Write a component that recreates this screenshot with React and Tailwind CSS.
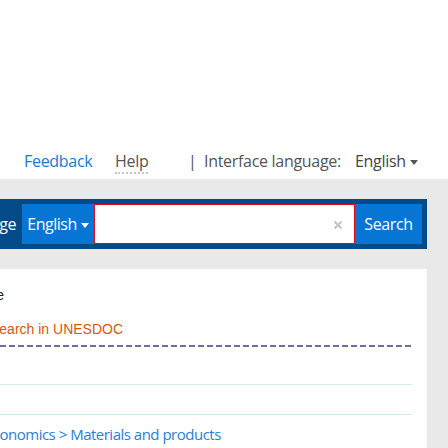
import React from 'react';

function Caret({ className }) {
  return (
    <svg className={className} width="8" height="5" viewBox="0 0 8 5">
      <path d="M0 0h8L4 5z" fill="currentColor" />
    </svg>
  );
}

export default function App() {
  return (
    <div className="w-[448px] h-[448px] overflow-hidden bg-[#e9e9e9] font-['Open_Sans',sans-serif]">
      {/* Top links */}
      <div className="h-[179px] bg-white flex items-end pb-[6px]">
        <div className="flex items-center h-[24px] text-[16px] tracking-[-0.3px] pl-[24px] whitespace-nowrap">
          <div className="w-[91px]">
            <a className="text-[#1a79d2]">Feedback</a>
          </div>
          <div className="w-[73px]">
            <span className="text-[#555] border-b-2 border-dotted border-[#c8c8c8] leading-[18px]">Help</span>
          </div>
          <div className="w-[16px] text-[#555]">|</div>
          <div className="w-[151px] text-[#555]">Interface language:</div>
          <div className="text-[#444] flex items-center gap-[4px]">
            English <Caret className="text-[#555] mt-[2px]" />
          </div>
        </div>
      </div>

      {/* Search bar */}
      <div className="pt-[20px] w-[427px]">
        <div className="h-[50px] bg-[#024a88] flex items-center p-[5px] pl-0">
          <div className="w-[22px] h-[40px] pr-[6px] flex items-center justify-end overflow-hidden whitespace-nowrap text-white text-[16px] tracking-[-0.5px] font-medium">
            Language
          </div>
          <div className="w-[72px] h-[40px] bg-[#0675d3] text-white flex items-center justify-center gap-[4px] text-[16px] tracking-[-0.5px] font-medium">
            English <Caret className="text-white mt-[2px]" />
          </div>
          <div className="flex-1 h-[40px] bg-white border-[1.5px] border-[#e30613] flex items-center justify-end pr-[11px]">
            <svg width="10" height="10" viewBox="0 0 10 10" className="mt-[2px]">
              <path d="M1.5 1.5l7 7M8.5 1.5l-7 7" stroke="#c4c4c4" strokeWidth="2" />
            </svg>
          </div>
          <div className="w-[67px] h-[40px] bg-[#0675d3] text-white flex items-center justify-center text-[16px] tracking-[-0.4px] font-medium">
            Search
          </div>
        </div>
      </div>

      {/* Results panel */}
      <div className="mt-[20px] w-[427px] h-[179px] bg-white font-['Liberation_Sans',Arial,sans-serif]">
        <div className="pt-[16px] h-[36px] flex">
          <div className="w-[4px] flex justify-end overflow-hidden whitespace-nowrap text-[14px] text-[#222]">
            Simple
          </div>
        </div>
        <div className="mt-[16px] ml-[-10px] text-[14px] text-[#d35a0b] whitespace-nowrap leading-[16px]">
          Search in UNESDOC
        </div>
        <div className="mt-[8px] w-[412px] h-[2px] bg-[repeating-linear-gradient(90deg,#66719f_0_6px,transparent_6px_9px)]" />
        <div className="mt-[37px] w-[412px] h-[1px] bg-[#d5ebea]" />
        <div className="mt-[29px] w-[412px] h-[1px] bg-[#d5ebea]" />
        <div className="mt-[8px] ml-[-15px] whitespace-nowrap text-[15px] tracking-[-0.5px] text-[#2a80d6] font-['Open_Sans',sans-serif]">
          Economics &gt; Materials and products
        </div>
      </div>
    </div>
  );
}
